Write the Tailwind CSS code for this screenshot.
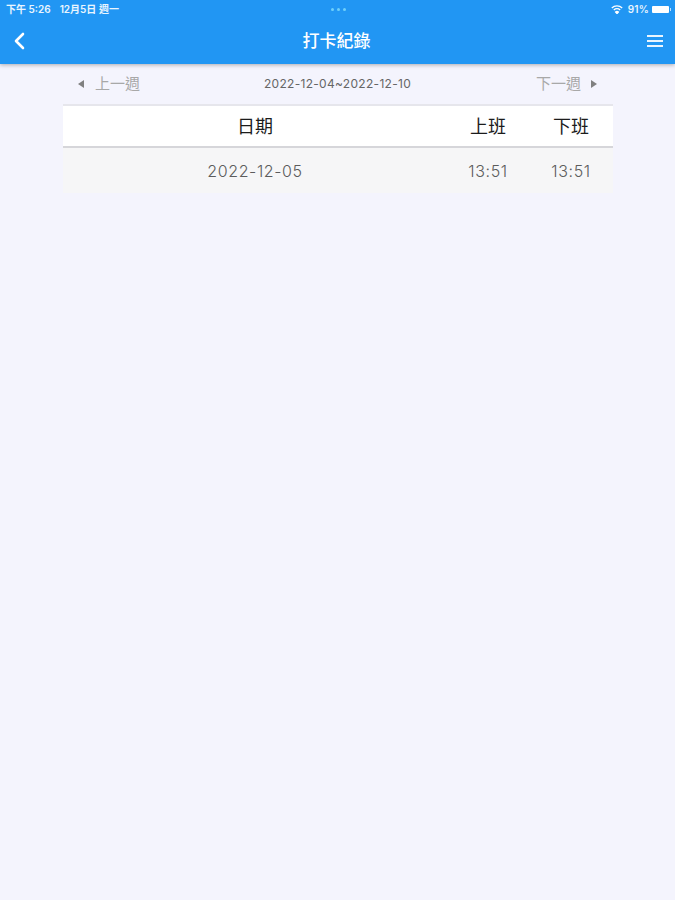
<!DOCTYPE html>
<html lang="zh-Hant">
  <head>
    <meta charset="UTF-8" />
    <meta name="viewport" content="width=device-width, initial-scale=1.0" />
    <title>打卡紀錄</title>
    <script src="https://cdn.jsdelivr.net/npm/@tailwindcss/browser@4"></script>
  </head>
  <body class="bg-[#f4f4fd] w-[675px] h-[900px] overflow-hidden font-['Inter','Noto_Sans_CJK_TC',sans-serif]">
    <header class="bg-[#2196f3] h-[64px] shadow-[0_1px_4px_rgba(0,0,0,0.3)] text-white">
      <div class="h-[18px] pl-[6px] pr-[4px] flex items-center justify-between text-[10px] leading-none font-semibold">
        <div class="flex gap-[9px] w-[200px] text-white/90">
          <span>下午 5:26</span>
          <span>12月5日 週一</span>
        </div>
        <div class="flex gap-[3px]">
          <span class="w-[3px] h-[3px] rounded-full bg-[#6fd0fb]"></span>
          <span class="w-[3px] h-[3px] rounded-full bg-[#6fd0fb]"></span>
          <span class="w-[3px] h-[3px] rounded-full bg-[#6fd0fb]"></span>
        </div>
        <div class="flex items-center justify-end gap-[3px] w-[200px] text-white/90">
          <svg width="12" height="9" viewBox="0 0 12 9" fill="none" stroke="white" stroke-width="1.3"><path d="M0.8 3 A7.5 7.5 0 0 1 11.2 3" /><path d="M2.8 5 A4.6 4.6 0 0 1 9.2 5" /><path d="M6 8.6 L4.6 7 A2 2 0 0 1 7.4 7 Z" fill="white" /></svg>
          <span class="ml-[2px] tracking-[0.2px]">91%</span>
          <span class="w-[17px] h-[7px] bg-white rounded-[1px]"></span>
          <span class="w-[1px] h-[3px] -ml-[2px] bg-white/70"></span>
        </div>
      </div>
      <div class="h-[46px] px-[13px] flex items-center justify-between">
        <svg width="12" height="18" viewBox="0 0 12 18" fill="none" stroke="white" stroke-width="2.6" stroke-linecap="round" stroke-linejoin="round"><path d="M10 2 L3 9 L10 16" /></svg>
        <h1 class="text-[17px] font-medium leading-none ml-[1px]">打卡紀錄</h1>
        <div class="w-[16px] -mr-[1px] flex flex-col gap-[3px]">
          <span class="h-[2px] bg-white/90"></span>
          <span class="h-[2px] bg-white/90"></span>
          <span class="h-[2px] bg-white/90"></span>
        </div>
      </div>
    </header>

    <main class="w-[550px] ml-[63px]">
      <div class="h-[40px] flex items-center justify-between pl-[15px] pr-[16px] text-[15px] text-[#a8a8a8]">
        <div class="flex items-center gap-[11px] w-[120px]">
          <span class="border-y-[4px] border-y-transparent border-r-[6px] border-r-[#808080]"></span>
          <span>上一週</span>
        </div>
        <span class="text-[12px] text-[#666666] tracking-[0.3px]">2022-12-04~2022-12-10</span>
        <div class="flex items-center justify-end gap-[10px] w-[120px]">
          <span>下一週</span>
          <span class="border-y-[4px] border-y-transparent border-l-[6px] border-l-[#808080]"></span>
        </div>
      </div>

      <div class="grid grid-cols-[384px_83px_83px] h-[44px] items-center bg-white border-y-2 border-t-[#e6e6ec] border-b-[#d6d6da] text-center text-[18px] font-normal text-[#1c1c1c]">
        <span class="pt-[1px]">日期</span>
        <span class="pt-[1px] -ml-[1px]">上班</span>
        <span class="pt-[1px] -ml-[1px]">下班</span>
      </div>
      <div class="grid grid-cols-[384px_83px_83px] h-[45px] pt-[1px] items-center bg-[#f6f6f7] text-center text-[16px] font-light text-[#5c5c5c] tracking-[0.6px]">
        <span>2022-12-05</span>
        <span class="-ml-[1px]">13:51</span>
        <span class="-ml-[1px]">13:51</span>
      </div>
    </main>
  </body>
</html>
